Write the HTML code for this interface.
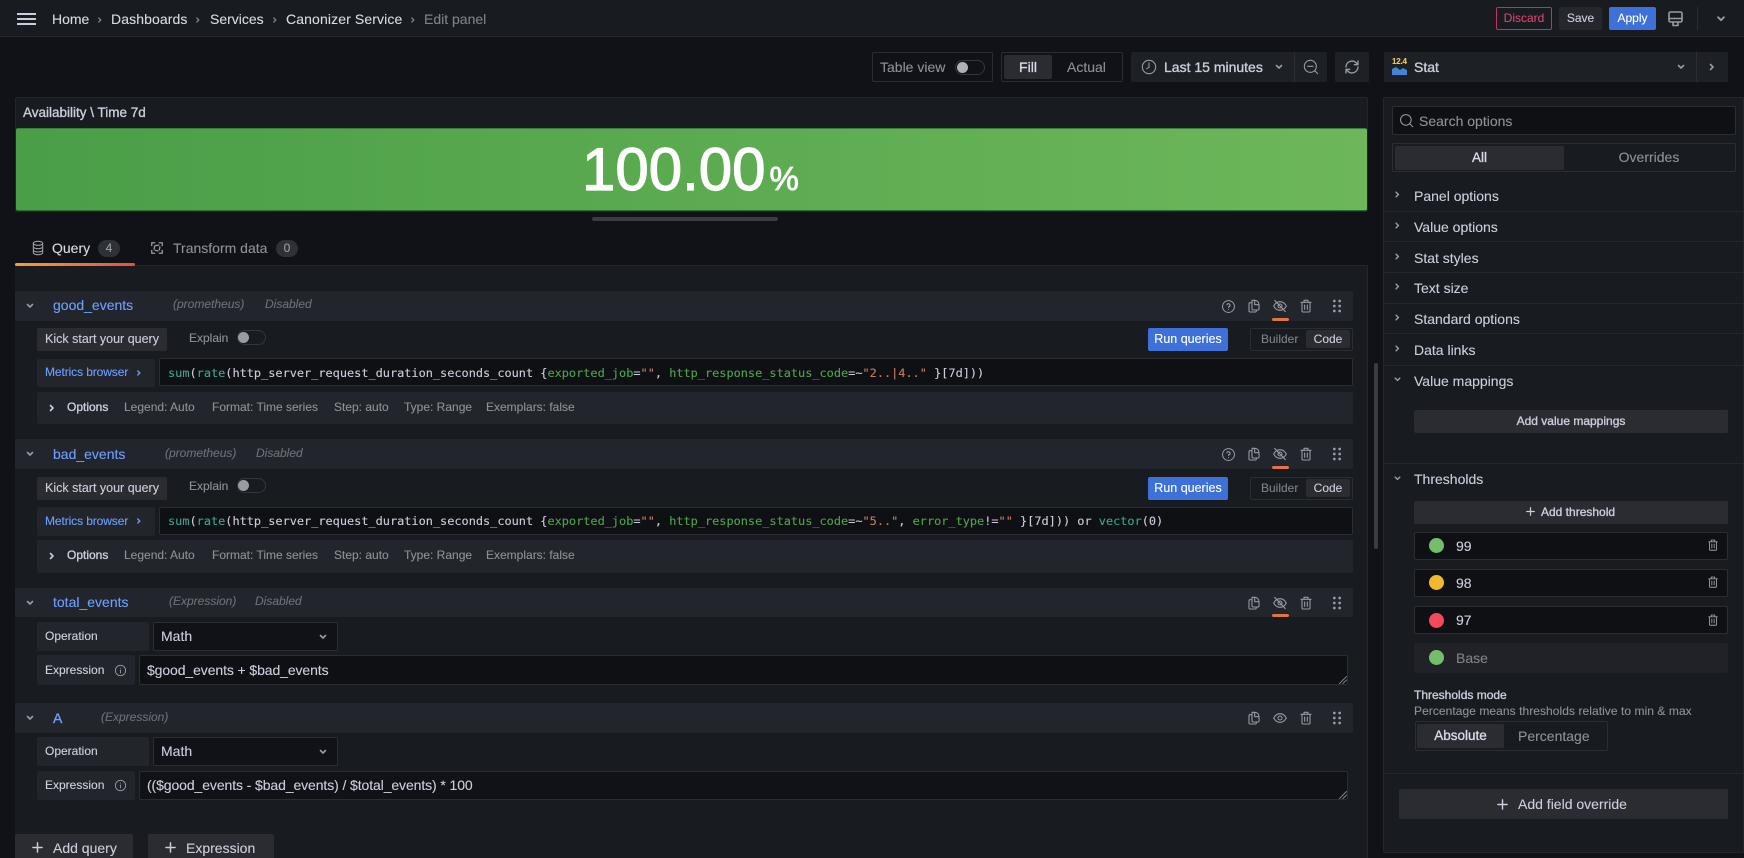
<!DOCTYPE html>
<html><head><meta charset="utf-8"><title>Edit panel</title>
<style>
html{background:#111217}
html,body{margin:0;padding:0;width:1744px;height:858px;overflow:hidden}
body{position:relative;background:#111217;font-family:"Liberation Sans",sans-serif;font-size:14px;color:#ccccdc;filter:blur(.35px);-webkit-text-stroke:.12px currentColor}
div,svg{position:absolute;box-sizing:border-box}
.t{line-height:20px;height:20px;white-space:nowrap}
.c{text-align:center}
.md{-webkit-text-stroke:.35px currentColor}
.m{font-family:"DejaVu Sans Mono","Liberation Mono",monospace;font-size:11.9px;color:#ccccdc}
.g{color:#8e9096}.d{color:#6d6f76;font-style:italic;font-size:12px}
.b{color:#6e9fff}
.s{font-size:12px}
.hdr{background:#22252b;left:15px;width:1338px;border-radius:2px}
.lab{background:#22252b;border-radius:2px}
.btn{background:#2a2c32;border-radius:2px}
.inp{background:#0f1014;border:1px solid #2b2d33;border-radius:2px}
.ln{left:1384px;width:359px;height:1px;background:#24262c}
svg{fill:none;stroke:#9a9ca3;stroke-width:1.6;stroke-linecap:round;stroke-linejoin:round}
.gr{color:#2fa869}.ob{color:#4fa24d}.or{color:#c77b5c}.te{color:#3aa590}
</style></head><body>
<svg width="0" height="0" style="left:0;top:0">
<defs>
<symbol id="copy" viewBox="0 0 24 24"><path d="M8 7H6A1.500 1.500 0 0 0 4.500 8.500v11A1.500 1.500 0 0 0 6 21h8a1.500 1.500 0 0 0 1.500-1.500V18"/><path d="M9 3.500V16.500A1.500 1.500 0 0 0 10.500 18H18a1.500 1.500 0 0 0 1.500-1.500V10C19.500 6 16.500 3.500 13 3.500Z"/><path d="M13 3.500V10H19.500"/></symbol>
<symbol id="eyeoff" viewBox="0 0 24 24"><path d="M2.500 12C5 7.500 8.500 5.500 12 5.500S19 7.500 21.500 12C19 16.500 15.500 18.500 12 18.500S5 16.500 2.500 12Z"/><circle cx="12" cy="12" r="3"/><path d="M4 3.500L20 20.500"/></symbol>
<symbol id="eye" viewBox="0 0 24 24"><path d="M2.500 12C5 7.500 8.500 5.500 12 5.500S19 7.500 21.500 12C19 16.500 15.500 18.500 12 18.500S5 16.500 2.500 12Z"/><circle cx="12" cy="12" r="3"/></symbol>
<symbol id="trash" viewBox="0 0 24 24"><path d="M4.500 6.500H19.500M9 6.500V3.500H15V6.500M6 6.500V19.500A1.500 1.500 0 0 0 7.500 21H16.500A1.500 1.500 0 0 0 18 19.500V6.500M10 10.500V17M14 10.500V17"/></symbol>
<symbol id="drag" viewBox="0 0 24 24"><g fill="#9a9ca3" stroke="none"><circle cx="8" cy="4.500" r="2"/><circle cx="16" cy="4.500" r="2"/><circle cx="8" cy="12" r="2"/><circle cx="16" cy="12" r="2"/><circle cx="8" cy="19.500" r="2"/><circle cx="16" cy="19.500" r="2"/></g></symbol>
<symbol id="help" viewBox="0 0 24 24"><circle cx="12" cy="12" r="9.500"/><path d="M9.500 9.500A2.500 2.500 0 1 1 12 12.500V13.500M12 16.800V17"/></symbol>
<symbol id="info" viewBox="0 0 24 24"><circle cx="12" cy="12" r="9.500"/><path d="M12 11V16.500M12 7.500V7.700"/></symbol>
<symbol id="dn" viewBox="0 0 12 12"><path d="M3.500 4.500L6 7L8.500 4.500"/></symbol>
<symbol id="rt" viewBox="0 0 12 12"><path d="M4.500 3.500L7 6L4.500 8.500"/></symbol>
<symbol id="plus" viewBox="0 0 12 12"><path d="M6 1V11M1 6H11"/></symbol>
</defs></svg>

<!-- top bar -->
<div style="left:0;top:0;width:1744px;height:37px;background:#181b1f;border-bottom:1px solid #26282e"></div>
<svg style="left:17px;top:13px" width="19" height="12"><path d="M0.500 1H18.500M0.500 6H18.500M0.500 11H18.500" stroke="#ccccdc" stroke-width="2"/></svg>
<div class="t" style="left:52px;top:9px;color:#d8d9e6">Home</div>
<svg style="left:95px;top:15px;stroke:#7f8189" width="10" height="10" viewBox="0 0 12 12"><use href="#rt"/></svg>
<div class="t" style="left:111px;top:9px;letter-spacing:.1px;color:#d8d9e6">Dashboards</div>
<svg style="left:193px;top:15px;stroke:#7f8189" width="10" height="10" viewBox="0 0 12 12"><use href="#rt"/></svg>
<div class="t" style="left:210px;top:9px;color:#d8d9e6">Services</div>
<svg style="left:270px;top:15px;stroke:#7f8189" width="10" height="10" viewBox="0 0 12 12"><use href="#rt"/></svg>
<div class="t" style="left:286px;top:9px;letter-spacing:.12px;color:#d8d9e6">Canonizer Service</div>
<svg style="left:408px;top:15px;stroke:#7f8189" width="10" height="10" viewBox="0 0 12 12"><use href="#rt"/></svg>
<div class="t" style="left:424px;top:9px;color:#7f8189">Edit panel</div>

<div class="t c s" style="left:1496px;top:7px;width:56px;height:23px;line-height:21px;border:1px solid #c4305f;border-radius:2px;color:#d8436e">Discard</div>
<div class="t c s" style="left:1559px;top:7px;width:43px;height:23px;line-height:23px;background:#25272d;border-radius:2px">Save</div>
<div class="t c s" style="left:1609px;top:7px;width:47px;height:23px;line-height:23px;background:#3d71d9;color:#fff;border-radius:2px">Apply</div>
<svg style="left:1668px;top:11px" width="15" height="16" viewBox="0 0 15 16"><rect x="1" y="1" width="13" height="10" rx="1.500"/><path d="M1 7.500H14M5 11V14.500H10V11"/></svg>
<div style="left:1697px;top:7px;width:1px;height:23px;background:#2b2d33"></div>
<svg style="left:1714px;top:12px;width:14px;height:14px" viewBox="0 0 12 12"><use href="#dn"/></svg>

<!-- toolbar -->
<div style="left:872px;top:52px;width:121px;height:30px;border:1px solid #2b2d33;border-radius:2px"></div>
<div class="t" style="left:880px;top:57px;color:#8e9096">Table view</div>
<div style="left:955px;top:60px;width:30px;height:15px;border:1px solid #34363c;border-radius:8px"></div>
<div style="left:957px;top:62px;width:11px;height:11px;border-radius:50%;background:#b0b1b8"></div>
<div style="left:1001px;top:52px;width:122px;height:30px;border:1px solid #2b2d33;border-radius:2px"></div>
<div class="t c btn md" style="left:1004px;top:55px;width:48px;height:24px;line-height:24px;color:#d8d9e6">Fill</div>
<div class="t" style="left:1067px;top:57px;color:#8e9096">Actual</div>
<div style="left:1131px;top:52px;width:196px;height:30px;background:#1d2025;border-radius:2px"></div>
<div style="left:1294px;top:52px;width:1px;height:30px;background:#2b2d33"></div>
<svg style="left:1141px;top:59px" width="16" height="16" viewBox="0 0 24 24"><circle cx="12" cy="12" r="10"/><path d="M12 6V12.500L8.500 14.500"/></svg>
<div class="t md" style="left:1164px;top:57px">Last 15 minutes</div>
<svg style="left:1273px;top:61px" width="12" height="12"><use href="#dn"/></svg>
<svg style="left:1303px;top:59px" width="16" height="16" viewBox="0 0 24 24"><circle cx="11" cy="11" r="9"/><path d="M7 11H15M18 18L22 22"/></svg>
<div style="left:1335px;top:52px;width:34px;height:30px;background:#1d2025;border-radius:2px"></div>
<svg style="left:1344px;top:59px" width="16" height="16" viewBox="0 0 24 24"><path d="M3 12A9 9 0 0 1 18.500 6L21 8.500M21 3V8.500H15.500M21 12A9 9 0 0 1 5.500 18L3 15.500M3 21V15.500H8.500" stroke-width="2"/></svg>
<div style="left:1384px;top:52px;width:344px;height:30px;background:#1d2025;border-radius:2px"></div>
<div style="left:1696px;top:52px;width:1px;height:30px;background:#2b2d33"></div>
<div style="left:1392px;top:57px;font-size:8px;line-height:9px;height:9px;font-weight:700;color:#f2c94c;letter-spacing:-.2px;white-space:nowrap">12.4</div>
<svg style="left:1392px;top:66px" width="15" height="9" viewBox="0 0 15 9"><path d="M0 3L4 1L8 4L11 2L15 4V9H0Z" fill="#3f86d6" stroke="none"/></svg>
<div class="t md" style="left:1414px;top:57px">Stat</div>
<svg style="left:1675px;top:61px" width="12" height="12"><use href="#dn"/></svg>
<svg style="left:1706px;top:61px" width="12" height="12"><use href="#rt"/></svg>

<!-- panel -->
<div style="left:15px;top:97px;width:1353px;height:115px;background:#181b1f;border:1px solid #22252a;border-radius:2px"></div>
<div class="t md" style="left:23px;top:103px;font-size:13.500px;color:#ccccdc">Availability \ Time 7d</div>
<div style="left:16px;top:128px;width:1351px;height:83px;background:linear-gradient(90deg,#4a9e47,#6db75a);border-top:1px solid #3a7d38;border-bottom:1px solid #2f6a2e;border-radius:2px"></div>
<div style="left:582px;top:137px;height:66px;line-height:66px;font-size:60px;color:#fff;white-space:nowrap;-webkit-text-stroke:1.2px #fff">100.00<span style="font-size:33px;margin-left:4px;-webkit-text-stroke:.8px #fff">%</span></div>
<div style="left:592px;top:217px;width:186px;height:4px;background:#3a3c42;border-radius:2px"></div>

<!-- tabs -->
<svg style="left:30px;top:240px" width="16" height="16" viewBox="0 0 24 24"><ellipse cx="12" cy="5" rx="7" ry="3"/><path d="M5 5V19C5 20.700 8 22 12 22S19 20.700 19 19V5M5 10C5 11.700 8 13 12 13S19 11.700 19 10M5 15C5 16.700 8 18 12 18S19 16.700 19 15"/></svg>
<div class="t" style="left:52px;top:238px;color:#d8d9e6">Query</div>
<div class="t c s" style="left:98px;top:240px;width:22px;height:17px;line-height:17px;border-radius:9px;background:#2f3138;color:#9a9ca3">4</div>
<svg style="left:150px;top:241px" width="14" height="14" viewBox="0 0 24 24"><path d="M3 8V3H8M16 3H21V8M21 16V21H16M8 21H3V16M9 8L15 7M17 10L16 15M14 17L9 16M7 14L8 9" stroke-width="2.200"/></svg>
<div class="t" style="left:173px;top:238px;color:#8e9096">Transform data</div>
<div class="t c s" style="left:276px;top:240px;width:22px;height:17px;line-height:17px;border-radius:9px;background:#2f3138;color:#9a9ca3">0</div>

<!-- query pane -->
<div style="left:15px;top:265px;width:1353px;height:593px;background:#181b1f;border-top:1px solid #24262c;border-right:1px solid #24262c"></div>
<div style="left:15px;top:263px;width:120px;height:3px;border-radius:2px;background:linear-gradient(90deg,#f2a13f,#e0533f)"></div>
<div style="left:1374px;top:363px;width:4px;height:186px;background:#3a3c42;border-radius:2px"></div>

<!-- row 1 -->
<div class="hdr" style="top:291px;height:30px"></div>
<svg style="left:24px;top:300px" width="12" height="12"><use href="#dn"/></svg>
<div class="t b" style="left:53px;top:295px">good_events</div>
<div class="t d" style="left:173px;top:294px">(prometheus)</div>
<div class="t d" style="left:265px;top:294px">Disabled</div>
<svg style="left:1221px;top:299px" width="15" height="15"><use href="#help"/></svg>
<svg style="left:1246px;top:298px" width="16" height="16"><use href="#copy"/></svg>
<svg style="left:1272px;top:298px" width="16" height="16"><use href="#eyeoff"/></svg>
<svg style="left:1298px;top:298px" width="16" height="16"><use href="#trash"/></svg>
<svg style="left:1329px;top:298px" width="16" height="16"><use href="#drag"/></svg>
<div style="left:1272px;top:318px;width:17px;height:3px;background:#e0753f;border-radius:2px"></div>
<div class="t c btn" style="left:37px;top:328px;width:130px;height:23px;line-height:23px;font-size:12.500px">Kick start your query</div>
<div class="t s g" style="left:189px;top:328px">Explain</div>
<div style="left:237px;top:330px;width:29px;height:15px;border:1px solid #34363c;border-radius:8px"></div>
<div style="left:238px;top:332px;width:11px;height:11px;border-radius:50%;background:#9a9ca3"></div>
<div style="left:1148px;top:328px;width:80px;height:23px;line-height:23px;text-align:center;font-size:12.500px;color:#fff;background:#3d71d9;border-radius:2px">Run queries</div>
<div style="left:1250px;top:328px;width:103px;height:23px;border:1px solid #2b2d33;border-radius:2px"></div>
<div class="t s" style="left:1261px;top:329px;color:#7f8189">Builder</div>
<div class="t c s btn" style="left:1306px;top:330px;width:44px;height:18px;line-height:18px">Code</div>
<div class="lab" style="left:37px;top:359px;width:118px;height:28px"></div>
<div class="t s" style="left:45px;top:362px;color:#6e9fff;letter-spacing:-.1px">Metrics browser</div>
<svg style="left:134px;top:368px;stroke:#6e9fff" width="10" height="10" viewBox="0 0 12 12"><use href="#rt"/></svg>
<div class="inp" style="left:159px;top:358px;width:1194px;height:28px"></div>
<div class="t m" style="left:168px;top:363px"><span class="te">sum</span>(<span class="te">rate</span>(http_server_request_duration_seconds_count {<span class="ob">exported_job</span>=<span class="or">""</span>, <span class="ob">http_response_status_code</span>=~<span class="or">"2..|4.."</span> }[7d]))</div>
<div class="lab" style="left:37px;top:392px;width:1316px;height:32px"></div>
<svg style="left:46px;top:402px;stroke:#ccccdc" width="12" height="12"><use href="#rt"/></svg>
<div class="t s md" style="left:67px;top:397px">Options</div>
<div class="t s g" style="left:124px;top:397px">Legend: Auto</div>
<div class="t s g" style="left:212px;top:397px">Format: Time series</div>
<div class="t s g" style="left:334px;top:397px">Step: auto</div>
<div class="t s g" style="left:404px;top:397px">Type: Range</div>
<div class="t s g" style="left:486px;top:397px">Exemplars: false</div>

<!-- row 2 -->
<div class="hdr" style="top:439px;height:30px"></div>
<svg style="left:24px;top:448px" width="12" height="12"><use href="#dn"/></svg>
<div class="t b" style="left:53px;top:444px">bad_events</div>
<div class="t d" style="left:165px;top:443px">(prometheus)</div>
<div class="t d" style="left:256px;top:443px">Disabled</div>
<svg style="left:1221px;top:447px" width="15" height="15"><use href="#help"/></svg>
<svg style="left:1246px;top:446px" width="16" height="16"><use href="#copy"/></svg>
<svg style="left:1272px;top:446px" width="16" height="16"><use href="#eyeoff"/></svg>
<svg style="left:1298px;top:446px" width="16" height="16"><use href="#trash"/></svg>
<svg style="left:1329px;top:446px" width="16" height="16"><use href="#drag"/></svg>
<div style="left:1272px;top:466px;width:17px;height:3px;background:#e0753f;border-radius:2px"></div>
<div class="t c btn" style="left:37px;top:477px;width:130px;height:23px;line-height:23px;font-size:12.500px">Kick start your query</div>
<div class="t s g" style="left:189px;top:476px">Explain</div>
<div style="left:237px;top:478px;width:29px;height:15px;border:1px solid #34363c;border-radius:8px"></div>
<div style="left:238px;top:480px;width:11px;height:11px;border-radius:50%;background:#9a9ca3"></div>
<div style="left:1148px;top:477px;width:80px;height:23px;line-height:23px;text-align:center;font-size:12.500px;color:#fff;background:#3d71d9;border-radius:2px">Run queries</div>
<div style="left:1250px;top:477px;width:103px;height:23px;border:1px solid #2b2d33;border-radius:2px"></div>
<div class="t s" style="left:1261px;top:478px;color:#7f8189">Builder</div>
<div class="t c s btn" style="left:1306px;top:479px;width:44px;height:18px;line-height:18px">Code</div>
<div class="lab" style="left:37px;top:507px;width:118px;height:29px"></div>
<div class="t s" style="left:45px;top:511px;color:#6e9fff;letter-spacing:-.1px">Metrics browser</div>
<svg style="left:134px;top:516px;stroke:#6e9fff" width="10" height="10" viewBox="0 0 12 12"><use href="#rt"/></svg>
<div class="inp" style="left:159px;top:507px;width:1194px;height:28px"></div>
<div class="t m" style="left:168px;top:511px"><span class="te">sum</span>(<span class="te">rate</span>(http_server_request_duration_seconds_count {<span class="ob">exported_job</span>=<span class="or">""</span>, <span class="ob">http_response_status_code</span>=~<span class="or">"5.."</span>, <span class="ob">error_type</span>!=<span class="or">""</span> }[7d])) or <span class="te">vector</span>(0)</div>
<div class="lab" style="left:37px;top:540px;width:1316px;height:33px"></div>
<svg style="left:46px;top:550px;stroke:#ccccdc" width="12" height="12"><use href="#rt"/></svg>
<div class="t s md" style="left:67px;top:545px">Options</div>
<div class="t s g" style="left:124px;top:545px">Legend: Auto</div>
<div class="t s g" style="left:212px;top:545px">Format: Time series</div>
<div class="t s g" style="left:334px;top:545px">Step: auto</div>
<div class="t s g" style="left:404px;top:545px">Type: Range</div>
<div class="t s g" style="left:486px;top:545px">Exemplars: false</div>

<!-- row 3 -->
<div class="hdr" style="top:588px;height:29px"></div>
<svg style="left:24px;top:597px" width="12" height="12"><use href="#dn"/></svg>
<div class="t b" style="left:53px;top:592px">total_events</div>
<div class="t d" style="left:169px;top:591px">(Expression)</div>
<div class="t d" style="left:255px;top:591px">Disabled</div>
<svg style="left:1246px;top:595px" width="16" height="16"><use href="#copy"/></svg>
<svg style="left:1272px;top:595px" width="16" height="16"><use href="#eyeoff"/></svg>
<svg style="left:1298px;top:595px" width="16" height="16"><use href="#trash"/></svg>
<svg style="left:1329px;top:595px" width="16" height="16"><use href="#drag"/></svg>
<div style="left:1272px;top:614px;width:17px;height:3px;background:#e0753f;border-radius:2px"></div>
<div class="lab" style="left:37px;top:622px;width:112px;height:29px"></div>
<div class="t s" style="left:45px;top:626px;color:#d0d1dc">Operation</div>
<div class="inp" style="left:153px;top:622px;width:185px;height:29px;background:#111217"></div>
<div class="t" style="left:161px;top:626px">Math</div>
<svg style="left:317px;top:631px" width="12" height="12"><use href="#dn"/></svg>
<div class="lab" style="left:37px;top:655px;width:98px;height:30px"></div>
<div class="t s" style="left:45px;top:660px;color:#d0d1dc">Expression</div>
<svg style="left:114px;top:664px" width="13" height="13"><use href="#info"/></svg>
<div class="inp" style="left:139px;top:655px;width:1209px;height:30px;background:#0f1014"></div>
<div class="t" style="left:147px;top:660px;letter-spacing:-.1px">$good_events + $bad_events</div>
<svg style="left:1339px;top:676px;stroke:#7f8189;stroke-width:1" width="8" height="8"><path d="M0.500 7.500L7.500 0.500M4 7.500L7.500 4"/></svg>

<!-- row 4 -->
<div class="hdr" style="top:703px;height:30px"></div>
<svg style="left:24px;top:712px" width="12" height="12"><use href="#dn"/></svg>
<div class="t b md" style="left:53px;top:708px">A</div>
<div class="t d" style="left:101px;top:707px">(Expression)</div>
<svg style="left:1246px;top:710px" width="16" height="16"><use href="#copy"/></svg>
<svg style="left:1272px;top:710px" width="16" height="16"><use href="#eye"/></svg>
<svg style="left:1298px;top:710px" width="16" height="16"><use href="#trash"/></svg>
<svg style="left:1329px;top:710px" width="16" height="16"><use href="#drag"/></svg>
<div class="lab" style="left:37px;top:737px;width:112px;height:29px"></div>
<div class="t s" style="left:45px;top:741px;color:#d0d1dc">Operation</div>
<div class="inp" style="left:153px;top:737px;width:185px;height:29px;background:#111217"></div>
<div class="t" style="left:161px;top:741px">Math</div>
<svg style="left:317px;top:746px" width="12" height="12"><use href="#dn"/></svg>
<div class="lab" style="left:37px;top:771px;width:98px;height:29px"></div>
<div class="t s" style="left:45px;top:775px;color:#d0d1dc">Expression</div>
<svg style="left:114px;top:779px" width="13" height="13"><use href="#info"/></svg>
<div class="inp" style="left:139px;top:771px;width:1209px;height:29px;background:#111217"></div>
<div class="t" style="left:147px;top:775px;letter-spacing:-.1px">(($good_events - $bad_events) / $total_events) * 100</div>
<svg style="left:1339px;top:791px;stroke:#7f8189;stroke-width:1" width="8" height="8"><path d="M0.500 7.500L7.500 0.500M4 7.500L7.500 4"/></svg>

<div class="btn" style="left:15px;top:834px;width:118px;height:30px"></div>
<svg style="left:32px;top:842px;stroke:#ccccdc" width="11" height="11" viewBox="0 0 12 12"><use href="#plus"/></svg>
<div class="t" style="left:53px;top:838px">Add query</div>
<div class="btn" style="left:148px;top:834px;width:126px;height:30px"></div>
<svg style="left:165px;top:842px;stroke:#ccccdc" width="11" height="11" viewBox="0 0 12 12"><use href="#plus"/></svg>
<div class="t" style="left:186px;top:838px">Expression</div>

<!-- options pane -->
<div style="left:1383px;top:97px;width:361px;height:756px;background:#181b1f;border:1px solid #24262c;border-radius:2px"></div>
<div class="inp" style="left:1392px;top:106px;width:344px;height:29px"></div>
<svg style="left:1399px;top:113px" width="15" height="15" viewBox="0 0 24 24"><circle cx="11" cy="11" r="8.500"/><path d="M17.500 17.500L22 22"/></svg>
<div class="t" style="left:1419px;top:111px;color:#8e9096">Search options</div>
<div style="left:1392px;top:143px;width:344px;height:29px;border:1px solid #2b2d33;border-radius:2px"></div>
<div class="t c btn md" style="left:1395px;top:146px;width:169px;height:24px;line-height:24px;color:#d8d9e6;font-size:13.500px">All</div>
<div class="t c" style="left:1565px;top:147px;width:168px;color:#8e9096">Overrides</div>

<svg style="left:1392px;top:189px" width="11" height="11" viewBox="0 0 12 12"><use href="#rt"/></svg>
<div class="t" style="left:1414px;top:186px">Panel options</div>
<div class="ln" style="top:211px"></div>
<svg style="left:1392px;top:220px" width="11" height="11" viewBox="0 0 12 12"><use href="#rt"/></svg>
<div class="t" style="left:1414px;top:217px">Value options</div>
<div class="ln" style="top:241px"></div>
<svg style="left:1392px;top:251px" width="11" height="11" viewBox="0 0 12 12"><use href="#rt"/></svg>
<div class="t" style="left:1414px;top:248px">Stat styles</div>
<div class="ln" style="top:272px"></div>
<svg style="left:1392px;top:281px" width="11" height="11" viewBox="0 0 12 12"><use href="#rt"/></svg>
<div class="t" style="left:1414px;top:278px">Text size</div>
<div class="ln" style="top:303px"></div>
<svg style="left:1392px;top:312px" width="11" height="11" viewBox="0 0 12 12"><use href="#rt"/></svg>
<div class="t" style="left:1414px;top:309px">Standard options</div>
<div class="ln" style="top:333px"></div>
<svg style="left:1392px;top:343px" width="11" height="11" viewBox="0 0 12 12"><use href="#rt"/></svg>
<div class="t" style="left:1414px;top:340px">Data links</div>
<div class="ln" style="top:365px"></div>
<svg style="left:1392px;top:374px" width="11" height="11" viewBox="0 0 12 12"><use href="#dn"/></svg>
<div class="t" style="left:1414px;top:371px">Value mappings</div>
<div class="t c s btn md" style="left:1414px;top:410px;width:314px;height:23px;line-height:23px">Add value mappings</div>
<div class="ln" style="top:463px"></div>
<svg style="left:1392px;top:473px" width="11" height="11" viewBox="0 0 12 12"><use href="#dn"/></svg>
<div class="t" style="left:1414px;top:469px">Thresholds</div>
<div class="btn" style="left:1414px;top:501px;width:314px;height:23px"></div>
<svg style="left:1526px;top:507px;stroke:#ccccdc" width="9" height="9" viewBox="0 0 12 12"><use href="#plus"/></svg>
<div class="t s md" style="left:1541px;top:502px">Add threshold</div>

<div class="inp" style="left:1414px;top:532px;width:314px;height:28px"></div>
<div style="left:1429px;top:538px;width:15px;height:15px;border-radius:50%;background:#73bf69"></div>
<div class="t" style="left:1456px;top:536px">99</div>
<svg style="left:1706px;top:538px" width="14" height="14"><use href="#trash"/></svg>
<div class="inp" style="left:1414px;top:569px;width:314px;height:28px"></div>
<div style="left:1429px;top:575px;width:15px;height:15px;border-radius:50%;background:#eeb92f"></div>
<div class="t" style="left:1456px;top:573px">98</div>
<svg style="left:1706px;top:575px" width="14" height="14"><use href="#trash"/></svg>
<div class="inp" style="left:1414px;top:606px;width:314px;height:28px"></div>
<div style="left:1429px;top:613px;width:15px;height:15px;border-radius:50%;background:#f2495c"></div>
<div class="t" style="left:1456px;top:610px">97</div>
<svg style="left:1706px;top:613px" width="14" height="14"><use href="#trash"/></svg>
<div style="left:1414px;top:643px;width:314px;height:30px;background:#202228;border-radius:2px"></div>
<div style="left:1429px;top:650px;width:15px;height:15px;border-radius:50%;background:#73bf69"></div>
<div class="t" style="left:1456px;top:648px;color:#7f8189">Base</div>

<div class="t s md" style="left:1414px;top:685px">Thresholds mode</div>
<div class="t s" style="left:1414px;top:701px;color:#8e9096;letter-spacing:.06px">Percentage means thresholds relative to min &amp; max</div>
<div style="left:1415px;top:721px;width:193px;height:30px;border:1px solid #2b2d33;border-radius:2px"></div>
<div class="t c btn md" style="left:1417px;top:724px;width:87px;height:24px;line-height:24px;color:#d8d9e6;font-size:13.500px">Absolute</div>
<div class="t" style="left:1518px;top:726px;color:#8e9096">Percentage</div>
<div class="ln" style="top:773px"></div>
<div class="btn" style="left:1399px;top:789px;width:329px;height:30px"></div>
<svg style="left:1497px;top:799px;stroke:#ccccdc" width="11" height="11" viewBox="0 0 12 12"><use href="#plus"/></svg>
<div class="t" style="left:1518px;top:794px">Add field override</div>
</body></html>
